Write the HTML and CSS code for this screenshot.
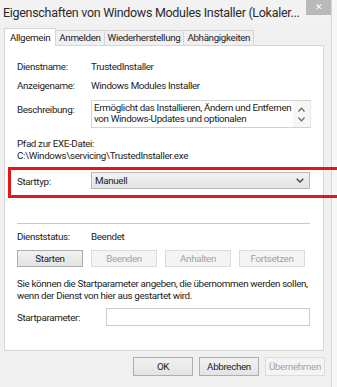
FILE: index.html
```html
<!DOCTYPE html>
<html lang="de">
<head>
    <meta charset="UTF-8">
    <title>Eigenschaften von Windows Modules Installer</title>
    <link rel="stylesheet" href="styles.css">
</head>
<body>
    <div class="window">
        <div class="titlebar">
            <span class="title">Eigenschaften von Windows Modules Installer (Lokaler...</span>
            <span class="close">&#x2715;</span>
        </div>

        <div class="tabs">
            <div class="tab active">Allgemein</div>
            <div class="tab">Anmelden</div>
            <div class="tab">Wiederherstellung</div>
            <div class="tab">Abhängigkeiten</div>
        </div>

        <div class="panel">
            <div class="row first">
                <span class="label">Dienstname:</span>
                <span class="value">TrustedInstaller</span>
            </div>
            <div class="row second">
                <span class="label">Anzeigename:</span>
                <span class="value">Windows Modules Installer</span>
            </div>
            <div class="row desc">
                <span class="label">Beschreibung:</span>
                <div class="textbox">
                    <div class="textbox-text">Ermöglicht das Installieren, Ändern und Entfernen<br>von Windows-Updates und optionalen</div>
                    <div class="scroll">
                        <svg width="7" height="5" viewBox="0 0 7 5"><path d="M0.5 4.5 L3.5 1.2 L6.5 4.5" fill="none" stroke="#606060" stroke-width="1.2"/></svg>
                        <svg width="7" height="5" viewBox="0 0 7 5"><path d="M0.5 0.5 L3.5 3.8 L6.5 0.5" fill="none" stroke="#606060" stroke-width="1.2"/></svg>
                    </div>
                </div>
            </div>
            <div class="path-label">Pfad zur EXE-Datei:</div>
            <div class="path">C:\Windows\servicing\TrustedInstaller.exe</div>
            <div class="row starttype">
                <span class="label">Starttyp:</span>
                <div class="combo">
                    <span>Manuell</span>
                    <svg width="8" height="5" viewBox="0 0 8 5"><path d="M0.7 0.7 L4 4 L7.3 0.7" fill="none" stroke="#404040" stroke-width="1.3"/></svg>
                </div>
            </div>
            <div class="separator"></div>
            <div class="row status">
                <span class="label">Dienststatus:</span>
                <span class="value">Beendet</span>
            </div>
            <div class="service-buttons">
                <button class="btn">Starten</button>
                <button class="btn" disabled>Beenden</button>
                <button class="btn" disabled>Anhalten</button>
                <button class="btn" disabled>Fortsetzen</button>
            </div>
            <p class="hint">Sie können die Startparameter angeben, die übernommen werden sollen,<br>wenn der Dienst von hier aus gestartet wird.</p>
            <div class="row params">
                <span class="label">Startparameter:</span>
                <div class="input"></div>
            </div>
        </div>

        <div class="footer">
            <button class="btn wide">OK</button>
            <button class="btn wide">Abbrechen</button>
            <button class="btn wide" disabled>Übernehmen</button>
        </div>
    </div>

    <div class="highlight"></div>
</body>
</html>
```

FILE: styles.css
```css
html {
    overflow: hidden;
}
body {
    margin: 0;
    background: #f7f7f7;
    font-family: Roboto, "Liberation Sans", sans-serif;
    font-size: 9.8px;
    letter-spacing: -0.35px;
    color: #1c1c1c;
    position: relative;
    height: 387px;
    overflow: hidden;
}

.window {
    width: 332px;
    height: 387px;
    background: #f0f0f0;
    border-right: 1px solid #d8d8d8;
    box-sizing: border-box;
}

.titlebar {
    height: 24px;
    display: flex;
    align-items: flex-start;
    justify-content: space-between;
    background: #f2f2f2;
}
.title {
    font-size: 12.5px;
    letter-spacing: -0.3px;
    line-height: 25px;
    padding-left: 3px;
    color: #2b2b2b;
    white-space: nowrap;
    overflow: hidden;
}
.close {
    width: 25px;
    height: 15px;
    flex-shrink: 0;
    background: #b9b9b9;
    color: #fff;
    font-size: 9px;
    letter-spacing: 0;
    line-height: 15px;
    text-align: center;
}

.tabs {
    display: flex;
    align-items: flex-end;
    height: 21px;
    padding-left: 4px;
}
.tab {
    height: 14px;
    line-height: 14px;
    padding: 0 3px;
    border: 1px solid #d6d6d6;
    border-bottom: none;
    margin-left: -1px;
    background: #f0f0f0;
    color: #222;
    white-space: nowrap;
}
.tab.active {
    height: 17px;
    line-height: 17px;
    margin-left: 0;
    background: #fff;
    position: relative;
    z-index: 1;
    margin-bottom: -1px;
    padding: 0 5px;
}

.panel {
    width: 320px;
    height: 306px;
    box-sizing: border-box;
    border: 1px solid #d6d6d6;
    background: #fff;
    padding: 14px 13px 0 12px;
    margin-left: 4px;
}

.row {
    display: flex;
    align-items: flex-start;
    line-height: 13px;
    white-space: nowrap;
}
.label {
    width: 74px;
    flex-shrink: 0;
}
.second {
    margin-top: 6px;
}
.desc {
    margin-top: 8px;
}
.desc .label {
    margin-top: 3px;
}
.textbox {
    flex: 1;
    height: 28px;
    box-sizing: border-box;
    border: 1px solid #d2d2d2;
    border-right-color: #e6e6e6;
    display: flex;
    line-height: 11px;
}
.textbox-text {
    flex: 1;
    padding: 1px 2px;
}
.scroll {
    width: 17px;
    background: #f6f6f6;
    display: flex;
    flex-direction: column;
    align-items: center;
    justify-content: space-between;
    padding: 6px 0 5px;
    box-sizing: border-box;
}

.path-label {
    margin-top: 10px;
    line-height: 12px;
}
.path {
    line-height: 12px;
}

.starttype {
    margin-top: 10px;
}
.starttype .label {
    margin-top: 3px;
}
.combo {
    flex: 1;
    height: 17px;
    box-sizing: border-box;
    border: 1px solid #b8b8b8;
    background: linear-gradient(#f2f2f2, #e4e4e4);
    display: flex;
    align-items: center;
    justify-content: space-between;
    padding: 0 5px 0 3px;
}

.separator {
    height: 1px;
    background: #c8c8c8;
    margin-top: 34px;
}

.status {
    margin-top: 6px;
}

.service-buttons {
    display: flex;
    gap: 8px;
    margin-top: 7px;
}
.btn {
    font-family: inherit;
    font-size: 9.8px;
    letter-spacing: -0.35px;
    color: #1c1c1c;
    width: 66px;
    height: 17px;
    padding: 0;
    border: 1px solid #adadad;
    background: linear-gradient(#f2f2f2, #e3e3e3);
    white-space: nowrap;
}
.btn:disabled {
    color: #a3a3a3;
    border-color: #dcdcdc;
    background: #f4f4f4;
}

.hint {
    margin: 11px 0 0;
    line-height: 12px;
    white-space: nowrap;
}

.params {
    margin-top: 6px;
}
.params .label {
    width: 89px;
    margin-top: 3px;
}
.input {
    flex: 1;
    height: 18px;
    box-sizing: border-box;
    border: 1px solid #cdcdcd;
}

.footer {
    display: flex;
    justify-content: flex-end;
    gap: 6px;
    padding: 6px 6px 0 0;
}
.btn.wide {
    width: 60px;
    height: 19px;
}

/* red annotation frame drawn over the dialog */
.highlight {
    position: absolute;
    left: 8px;
    top: 167px;
    width: 329px;
    height: 31px;
    box-sizing: border-box;
    border: 3px solid #e3161b;
    border-right: none;
}
```
